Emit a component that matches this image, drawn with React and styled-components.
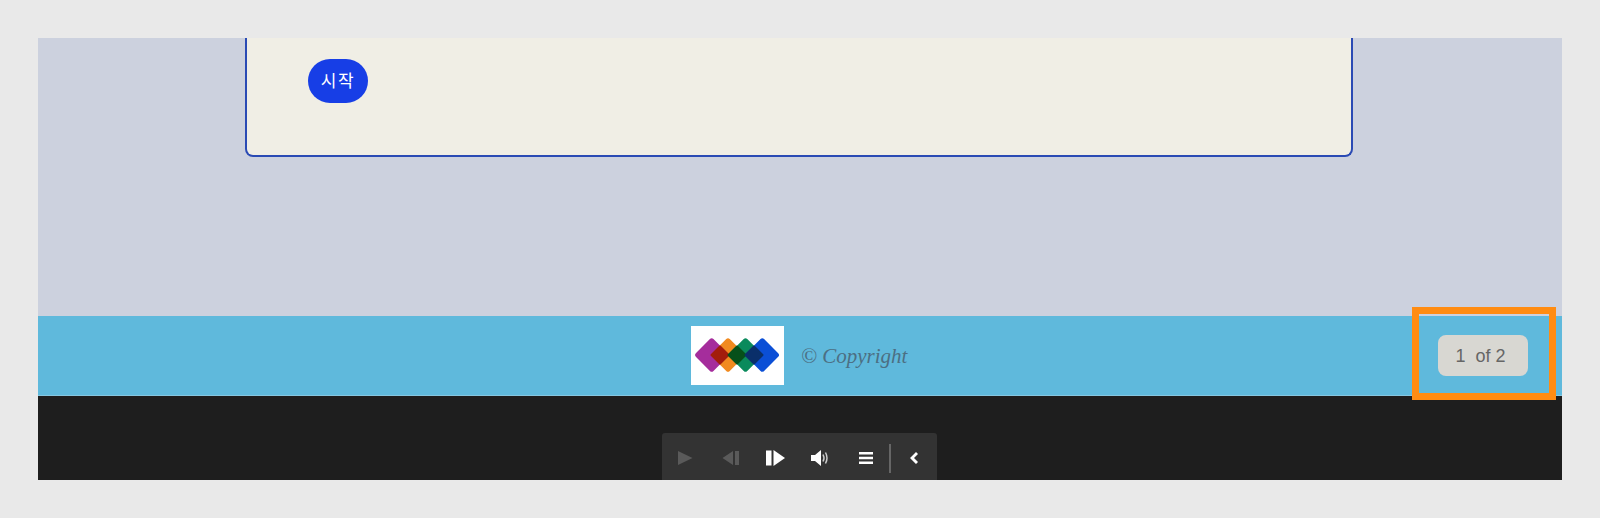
import React from "react";
import styled, { createGlobalStyle } from "styled-components";

const Global = createGlobalStyle`
  html, body { margin: 0; padding: 0; background: #e9e9e9; }
  body { font-family: "Liberation Sans", Arial, sans-serif; }
`;
const Page = styled.div`
  box-sizing: border-box;
  width: 1600px;
  height: 518px;
  padding: 38px;
  overflow: hidden;
`;
const Frame = styled.div`
  position: relative;
  height: 442px;
  display: flex;
  flex-direction: column;
  overflow: hidden;
`;
const Stage = styled.main`
  box-sizing: border-box;
  height: 278px;
  flex: none;
  background: #ccd1de;
  padding-left: 207px;
  padding-right: 209px;
`;
const Card = styled.section`
  box-sizing: border-box;
  height: 119px;
  background: #f0eee5;
  border: 2px solid #2a4ab4;
  border-top: 0;
  border-radius: 0 0 8px 8px;
  padding: 21px 0 0 61px;
`;
const StartButton = styled.button`
  display: block;
  width: 60px;
  height: 44px;
  padding: 0 0 4px;
  border: 0;
  border-radius: 22px;
  background: #173ee6;
  color: #fff;
  font-family: "Noto Sans CJK KR", "Liberation Sans", sans-serif;
  font-size: 17px;
  font-weight: 400;
  letter-spacing: 1.5px;
  line-height: 1;
`;
const Footer = styled.footer`
  box-sizing: border-box;
  height: 80px;
  flex: none;
  display: grid;
  grid-template-columns: 1fr auto 1fr;
  align-items: center;
  background: #5fb9dc;
  border-bottom: 1px solid #86c7e1;
`;
const Brand = styled.div`
  grid-column: 2;
  display: flex;
  align-items: center;
  gap: 17px;
  margin-left: -1px;
`;
const LogoBox = styled.div`
  width: 93px;
  height: 59px;
  background: #fff;
  display: flex;
`;
const Copyright = styled.span`
  width: 107px;
  padding-top: 1px;
  font-family: "Liberation Serif", serif;
  font-style: italic;
  font-size: 21px;
  color: #4c6f83;
  white-space: nowrap;
`;
const Counter = styled.div`
  justify-self: end;
  margin-right: 34px;
  width: 90px;
  height: 41px;
  box-sizing: border-box;
  padding: 1px 5px 0 0;
  display: flex;
  align-items: center;
  justify-content: center;
  background: #d8d7d2;
  border-radius: 8px;
  color: #666;
  font-size: 18px;
  white-space: pre;
`;
const Highlight = styled.div`
  position: absolute;
  left: 1374px;
  top: 269px;
  width: 144px;
  height: 93px;
  box-sizing: border-box;
  border: 7px solid #ff8c12;
  pointer-events: none;
`;
const Dock = styled.div`
  flex: 1;
  background: #1e1e1e;
  display: flex;
  justify-content: center;
  padding-top: 37px;
`;
const Toolbar = styled.nav`
  box-sizing: border-box;
  width: 275px;
  height: 50px;
  margin-left: -2px;
  flex: none;
  background: #333;
  border-radius: 3px;
  display: flex;
  align-items: center;
`;
const ToolIcon = styled.svg`
  flex: none;
  width: 24px;
  height: 24px;
  margin-left: ${(p) => p.$gap}px;
  fill: ${(p) => (p.$off ? "#5a5a5a" : "#fff")};
  stroke: none;
`;
const Divider = styled.span`
  flex: none;
  width: 2px;
  height: 29px;
  margin-left: 11px;
  background: #666;
`;

function Logo() {
  const d = (cx, r, fill) => (
    <rect x={cx - r} y={29 - r} width={r * 2} height={r * 2} rx={r > 8 ? 2.5 : 1} transform={`rotate(45 ${cx} 29)`} fill={fill} />
  );
  return (
    <svg width="93" height="59" viewBox="0 0 93 59">
      {d(37, 12.5, "#f18a1f")}
      {d(54.500, 12.5, "#0a8a5c")}
      {d(20.700, 12.5, "#a52d9c")}
      {d(71.300, 12.5, "#0b4fd6")}
      {d(29, 7, "#a31d0c")}
      {d(46, 7, "#06501a")}
      {d(63, 7, "#0a2f6a")}
    </svg>
  );
}

export default function App() {
  return (
    <Page>
      <Global />
      <Frame>
        <Stage>
          <Card>
            <StartButton>시작</StartButton>
          </Card>
        </Stage>
        <Footer>
          <Brand>
            <LogoBox><Logo /></LogoBox>
            <Copyright>© Copyright</Copyright>
          </Brand>
          <Counter>1  of 2</Counter>
        </Footer>
        <Highlight />
        <Dock>
          <Toolbar>
            <ToolIcon $gap={11} $off viewBox="0 0 24 24"><path d="M5 5 19.500 12 5 19Z" /></ToolIcon>
            <ToolIcon $gap={21} $off viewBox="0 0 24 24"><path d="M15 5 4.500 12 15 19ZM17 5h4v14h-4Z" /></ToolIcon>
            <ToolIcon $gap={21} viewBox="0 0 24 24"><path d="M3 4.500h5.500v15H3ZM10.500 4 22 12l-11.500 8Z" /></ToolIcon>
            <ToolIcon $gap={21} viewBox="0 0 24 24">
              <path d="M3 9h4l6-5v16l-6-5H3Z" />
              <path d="M15 8.500q2 3.500 0 7M17.500 6.500q3 5.500 0 11" fill="none" stroke="#ccc" strokeWidth="1.500" />
            </ToolIcon>
            <ToolIcon $gap={22} viewBox="0 0 24 24"><path d="M5 6h14v2.500H5ZM5 10.800h14v2.500H5ZM5 15.500h14V18H5Z" /></ToolIcon>
            <Divider />
            <ToolIcon $gap={10} viewBox="0 0 24 24"><path d="m15 6 2 2-4 4 4 4-2 2-6-6Z" /></ToolIcon>
          </Toolbar>
        </Dock>
      </Frame>
    </Page>
  );
}
